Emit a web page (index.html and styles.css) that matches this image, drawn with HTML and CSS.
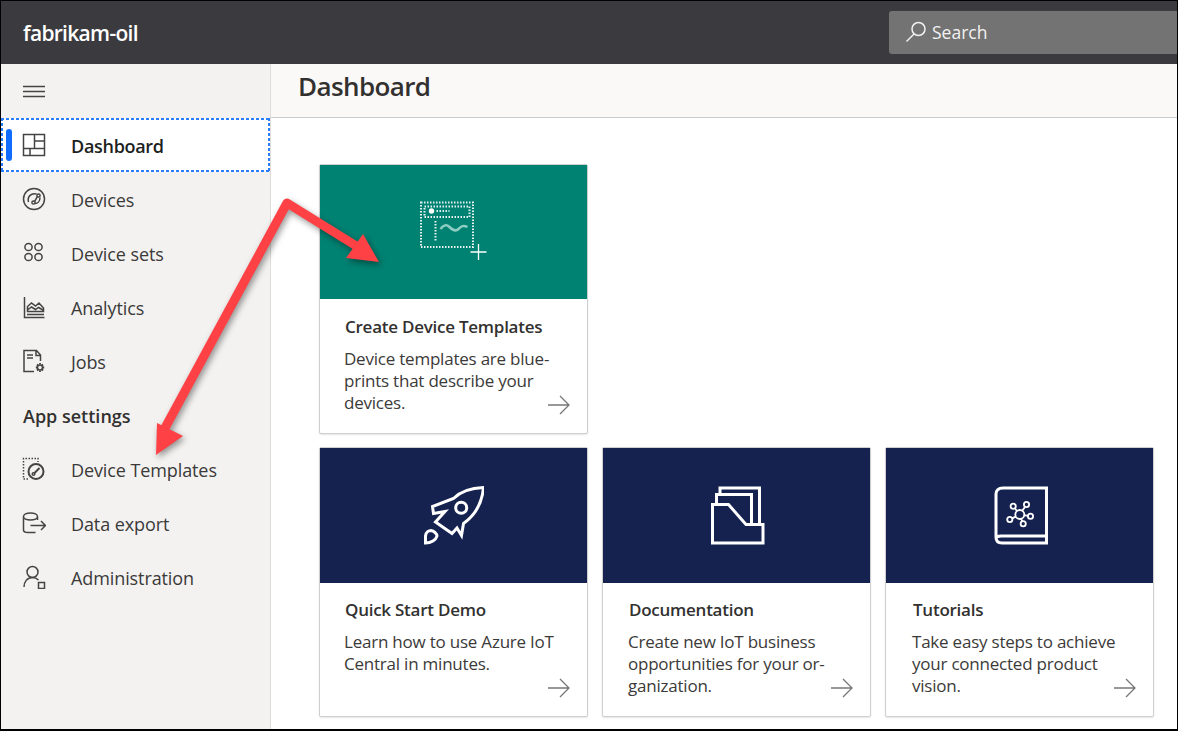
FILE: index.html
```html
<!DOCTYPE html>
<html lang="en">
<head>
  <meta charset="UTF-8">
  <title>Dashboard - fabrikam-oil</title>
  <link rel="stylesheet" href="styles.css">
</head>
<body>
  <div class="app">
    <header class="topbar">
      <div class="brand">fabrikam-oil</div>
      <div class="search">
        <svg class="search-icon" viewBox="0 0 22 22"><circle cx="13.500" cy="8" r="6.500"/><path d="M9 13 1.500 20.500"/></svg>
        <span>Search</span>
      </div>
    </header>
    <div class="layout">
      <aside class="sidebar">
        <div class="burger">
          <svg viewBox="0 0 24 24"><path d="M1 6.500h22M1 11.500h22M1 16.500h22"/></svg>
        </div>
        <nav>
          <a class="nav-item active" href="#">
            <svg viewBox="0 0 24 24"><path d="M1.500 1.500h21v21h-21zM12.500 1.500v14M1.500 15.500h21M12.500 8h10M8 15.500v7"/></svg>
            <span>Dashboard</span>
          </a>
          <a class="nav-item" href="#">
            <svg viewBox="0 0 24 24"><circle cx="12" cy="12" r="10.500"/><circle cx="11.500" cy="15.500" r="1.600"/><circle cx="16.500" cy="8.500" r="1.600"/><path d="M6.500 15C5 9.500 9.500 5.500 14.500 7M12.700 14.300 15.300 9.700M13 16.500C15.500 16.500 18 14.500 18 10.500"/></svg>
            <span>Devices</span>
          </a>
          <a class="nav-item" href="#">
            <svg viewBox="0 0 24 24"><circle cx="6.500" cy="6" r="3.600"/><circle cx="16.500" cy="6" r="3.600"/><circle cx="6.500" cy="16" r="3.600"/><circle cx="16.500" cy="16" r="3.600"/></svg>
            <span>Device sets</span>
          </a>
          <a class="nav-item" href="#">
            <svg viewBox="0 0 24 24"><path d="M2.500 2v20.500h20M5 19.500h17M5.500 16.500v-5l4-3.500 4 3 3.500-3 4.500 5v3.500zM5.500 15l4-3 4 2.500 3-2 4.500 2.500"/></svg>
            <span>Analytics</span>
          </a>
          <a class="nav-item" href="#">
            <svg viewBox="0 0 24 24"><path d="M12 22.500H2V1.500h12.500l4 4.500v6M14 1.500V6.500h4.500M5 6h6M5 9h6"/><circle cx="18" cy="18.500" r="2.500"/><path class="thick" d="M18 14v1.500M18 21.500V23M13.800 18.500h1.500M20.700 18.500h1.500M15 15.500l1 1M20 20.500l1 1M15 21.500l1-1M20 16.500l1-1"/></svg>
            <span>Jobs</span>
          </a>
          <div class="nav-heading">App settings</div>
          <a class="nav-item" href="#">
            <svg viewBox="0 0 24 24"><path class="dotted" d="M6 22H1.500V1.500h14.500V5"/><circle cx="14" cy="14.500" r="7.500" class="heavy"/><circle cx="11.500" cy="17" r="1.300"/><path class="heavy" d="M12.500 16 17.500 11"/></svg>
            <span>Device Templates</span>
          </a>
          <a class="nav-item" href="#">
            <svg viewBox="0 0 24 24"><path d="M13.500 21.500H6C3.500 21.500 1.500 20.500 1.500 19V5.500C1.500 3.500 4.500 2 8.500 2s7 1.500 7 3.500V9M1.500 5.500C1.500 7.500 4.500 9 8.500 9s7-1.500 7-3.500M8.500 14.500h15M19 10l4.500 4.500L19 19"/></svg>
            <span>Data export</span>
          </a>
          <a class="nav-item" href="#">
            <svg viewBox="0 0 24 24"><circle cx="10.500" cy="7" r="5.500"/><path d="M2 22c0-5 3-9.500 8.500-9.500 2.500 0 4.500 1 6 2.500M16.500 17.500h6v6h-6z"/></svg>
            <span>Administration</span>
          </a>
        </nav>
      </aside>
      <main class="content">
        <div class="title-bar"><h1>Dashboard</h1></div>
        <div class="cards">
          <section class="card">
            <div class="card-art teal">
              <svg class="art-template" viewBox="0 0 68 64">
                <g class="art-dots">
                  <path d="M2 2.500h52v44.500h-52z"/>
                  <path d="M5.500 6.500h45v10.500h-45zM16.500 21v21M17.500 11h13"/>
                </g>
                <circle class="art-fill" cx="12.500" cy="11" r="2.700"/>
                <path class="art-wave" d="M21.500 29c3-4 6-5 9-2s6 5 9 2 5-4 9-2"/>
                <path class="art-plus" d="M59.500 44v16M51.500 52h16"/>
              </svg>
            </div>
            <div class="card-body">
              <h2>Create Device Templates</h2>
              <p>Device templates are blue-<br>prints that describe your<br>devices.</p>
            </div>
            <svg class="go" viewBox="0 0 22 20"><path d="M0 10h21M12 1l9 9-9 9"/></svg>
          </section>
          <div class="card-spacer"></div>
          <div class="card-spacer"></div>

          <section class="card">
            <div class="card-art navy">
              <svg class="art-icon" viewBox="0 0 60 60">
                <path d="M59.500 1.500C46 2 36 6 29.500 12.500L8.500 20.500 9.500 27.500 21 25.500 11.500 36 28 47.500 33 42 37.500 49.500 39.500 37.500C50 30 58 18 59.500 1.500Z"/>
                <circle cx="37.200" cy="21.800" r="5.500"/>
                <path d="M1.500 57V50C2 46 5 44.500 7 44.500 10 45 13 48 13 50 12 54 7 57 1.500 57Z"/>
              </svg>
            </div>
            <div class="card-body">
              <h2>Quick Start Demo</h2>
              <p>Learn how to use Azure IoT<br>Central in minutes.</p>
            </div>
            <svg class="go" viewBox="0 0 22 20"><path d="M0 10h21M12 1l9 9-9 9"/></svg>
          </section>
          <section class="card card-docs">
            <div class="card-art navy">
              <svg class="art-icon" viewBox="0 0 60 60">
                <path d="M5.500 18.500h16L39 38.500H56V57H5.500z"/>
                <path d="M9.500 18V8.500H44.500V38"/>
                <path d="M13 8.500V2H52.500V38"/>
              </svg>
            </div>
            <div class="card-body">
              <h2>Documentation</h2>
              <p>Create new IoT business<br>opportunities for your or-<br>ganization.</p>
            </div>
            <svg class="go" viewBox="0 0 22 20"><path d="M0 10h21M12 1l9 9-9 9"/></svg>
          </section>
          <section class="card card-tutorials">
            <div class="card-art navy">
              <svg class="art-icon" viewBox="0 0 60 60">
                <path d="M56.500 2H13C8 2 6 5 6 8V51C6 55 8 57 12 57H56.500zM56.500 50H11C8 50 6 51 6 53"/>
                <g class="art-thin">
                  <circle cx="29.800" cy="28.500" r="4.500"/>
                  <circle cx="23.200" cy="20.200" r="2.600"/><circle cx="36.500" cy="18.500" r="2.600"/><circle cx="40.500" cy="30.200" r="2.600"/><circle cx="33.200" cy="37.800" r="2.600"/><circle cx="19.800" cy="33.500" r="2.600"/>
                  <path d="M25 22.500l2 2.500M35 21l-3 4M38 29.800l-3.800-.6M31 32.700l1.300 2.600M22.200 32.400l3.500-1.800"/>
                </g>
              </svg>
            </div>
            <div class="card-body">
              <h2>Tutorials</h2>
              <p>Take easy steps to achieve<br>your connected product<br>vision.</p>
            </div>
            <svg class="go" viewBox="0 0 22 20"><path d="M0 10h21M12 1l9 9-9 9"/></svg>
          </section>
        </div>
      </main>
    </div>
    <!-- callout arrows drawn over the screenshot -->
    <svg class="callouts" viewBox="0 0 1178 731">
      <path class="shaft" d="M165 428 287 203 358 247"/>
      <path class="head" d="M379 262 346 258 363 234z"/>
      <path class="head" d="M156 455 157 423 183 436z"/>
    </svg>
  </div>
</body>
</html>
```

FILE: styles.css
```css
* {
  box-sizing: border-box;
}
body {
  margin: 0;
  background-color: #fff;
  font-family: "Open Sans", "Noto Sans", sans-serif;
  color: #323130;
}
.app {
  position: relative;
  width: 1178px;
  height: 731px;
  border: 1px solid #000;
  border-bottom-width: 2px;
  overflow: hidden;
  display: flex;
  flex-direction: column;
}
.topbar {
  height: 63px;
  flex-shrink: 0;
  background-color: #3b3a3e;
  display: flex;
  align-items: center;
  justify-content: space-between;
  padding-left: 22px;
}
.brand {
  color: #fff;
  font-size: 21px;
  font-weight: 600;
  letter-spacing: -0.7px;
}
.search {
  width: 288px;
  height: 43px;
  margin-top: -1px;
  background-color: #737373;
  border-radius: 3px 0 0 3px;
  display: flex;
  align-items: center;
  gap: 5px;
  padding-left: 16px;
  color: #f2f2f2;
  font-size: 17.500px;
}
.search-icon {
  width: 22px;
  height: 22px;
  fill: none;
  stroke: #f2f2f2;
  stroke-width: 1.500;
}
.layout {
  flex: 1;
  display: flex;
  min-height: 0;
}
.sidebar {
  width: 270px;
  flex-shrink: 0;
  background-color: #f3f2f1;
  border-right: 1px solid #dedddc;
}
.sidebar svg {
  width: 24px;
  height: 24px;
  flex-shrink: 0;
  fill: none;
  stroke: #444;
  stroke-width: 1.500;
}
.burger {
  height: 54px;
  display: flex;
  align-items: center;
  padding: 2px 0 0 21px;
}
.nav-item {
  height: 54px;
  display: flex;
  align-items: center;
  gap: 25px;
  padding-left: 21px;
  color: #3b3a39;
  font-size: 18px;
  letter-spacing: -0.1px;
  text-decoration: none;
}
.nav-item span {
  margin-top: 2px;
}
/* dashed focus box: 3px dash, 2px gap on all four edges */
.nav-item.active {
  position: relative;
  color: #201f1e;
  font-weight: 600;
  letter-spacing: -0.3px;
  background-color: #fff;
  background-image:
    linear-gradient(90deg, #2a7dff 3px, transparent 3px),
    linear-gradient(90deg, #2a7dff 3px, transparent 3px),
    linear-gradient(#2a7dff 3px, transparent 3px),
    linear-gradient(#2a7dff 3px, transparent 3px);
  background-size: 5px 2px, 5px 2px, 2px 5px, 2px 5px;
  background-position: 0 0, 0 100%, 0 0, 100% 0;
  background-repeat: repeat-x, repeat-x, repeat-y, repeat-y;
}
.nav-item.active::before {
  content: "";
  position: absolute;
  left: 5px;
  top: 11px;
  width: 6px;
  height: 32px;
  border-radius: 3px;
  background-color: #0f6cff;
}
.nav-heading {
  height: 54px;
  display: flex;
  align-items: center;
  padding: 2px 0 0 22px;
  color: #323130;
  font-size: 18px;
  font-weight: 600;
  letter-spacing: 0;
}
.thick {
  stroke-width: 1.800;
}
.dotted {
  stroke-dasharray: 1.500 1.500;
}
.sidebar .heavy {
  stroke-width: 2;
}
.content {
  flex: 1;
  min-width: 0;
}
.title-bar {
  height: 54px;
  background-color: #faf9f7;
  border-bottom: 1px solid #ccc;
  display: flex;
  align-items: center;
  padding: 0 0 10px 27px;
}
.title-bar h1 {
  margin: 0;
  font-size: 26px;
  font-weight: 600;
  letter-spacing: -0.6px;
  color: #323130;
}
.cards {
  display: grid;
  grid-template-columns: repeat(3, 269px);
  grid-template-rows: 270px 270px;
  column-gap: 14px;
  row-gap: 13px;
  padding: 46px 0 0 48px;
}
.card {
  position: relative;
  background-color: #fff;
  border: 1px solid #cfcfcf;
  border-radius: 2px;
  box-shadow: 0 1px 2px rgba(0, 0, 0, 0.1);
}
.card-art {
  height: 135px;
  display: flex;
  align-items: center;
  justify-content: center;
}
.teal {
  height: 134px;
  margin-bottom: 1px;
  background-color: #008272;
}
.navy {
  background-color: #15214f;
}
.art-template {
  width: 68px;
  height: 64px;
  margin-left: -2px;
  fill: none;
  stroke: #fff;
}
.art-dots {
  stroke-width: 2;
  stroke-dasharray: 1.500 1.500;
  opacity: 0.9;
}
.art-fill {
  fill: #fff;
  stroke: none;
}
.art-wave {
  stroke: #8fcdc2;
  stroke-width: 2.500;
}
.art-plus {
  stroke-width: 1.300;
}
.art-icon {
  width: 60px;
  height: 60px;
  fill: none;
  stroke: #fff;
  stroke-width: 3;
}
.art-thin {
  stroke-width: 1.800;
}
.card-body {
  padding: 15px 25px 0 25px;
}
.card-docs .card-body {
  padding-left: 26px;
}
.card-tutorials .card-body {
  padding-left: 27px;
}
.card-body h2 {
  margin: 0 0 9px 0;
  font-size: 17px;
  line-height: 24px;
  font-weight: 600;
  letter-spacing: -0.25px;
  color: #323130;
}
.card-body p {
  margin: 0 0 0 -1px;
  font-size: 17px;
  line-height: 22px;
  letter-spacing: -0.22px;
  color: #3b3a39;
}
.go {
  position: absolute;
  right: 17px;
  bottom: 18px;
  width: 22px;
  height: 20px;
  fill: none;
  stroke: #777;
  stroke-width: 1.300;
}
.callouts {
  position: absolute;
  left: -1px;
  top: -1px;
  width: 1178px;
  height: 731px;
  filter: drop-shadow(2px 3px 3px rgba(0, 0, 0, 0.4));
}
.shaft {
  fill: none;
  stroke: #fd4145;
  stroke-width: 9;
  stroke-linejoin: round;
}
.head {
  fill: #fd4145;
}
```
